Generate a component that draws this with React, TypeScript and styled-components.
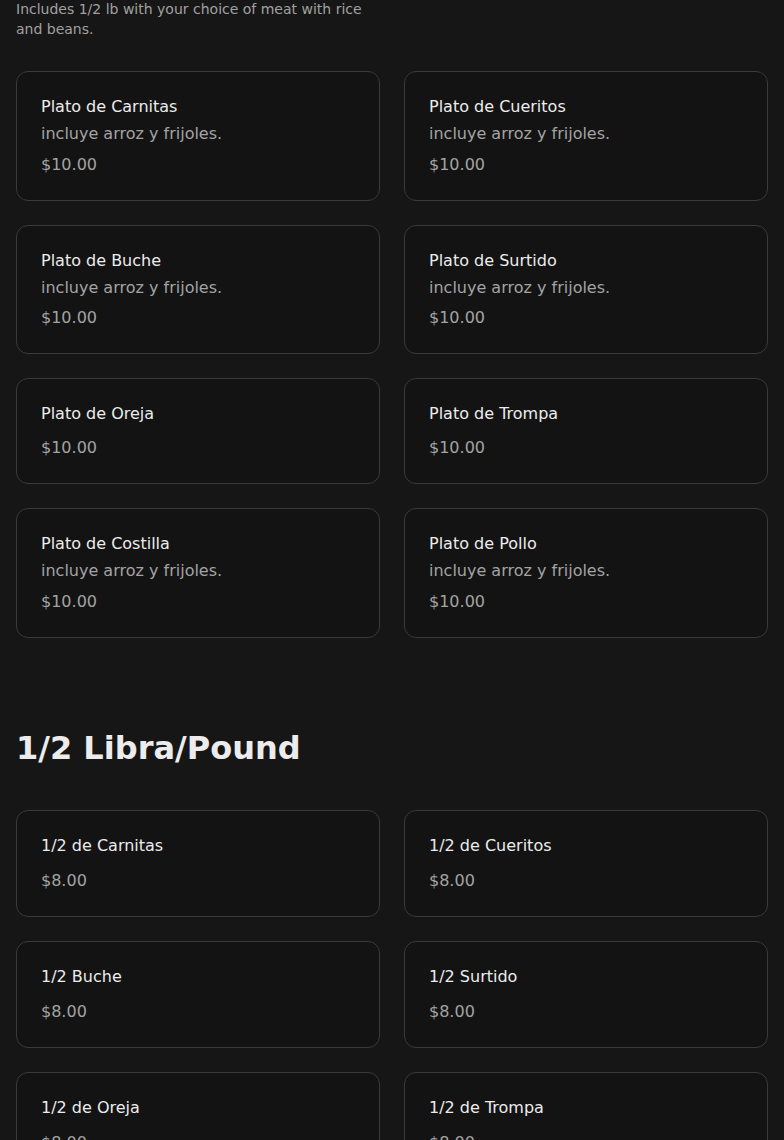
import React from 'react'
import styled, { createGlobalStyle } from 'styled-components'

const GlobalStyle = createGlobalStyle`
    html, body {
        margin: 0;
        padding: 0;
        background: #161616;
    }
    body {
        font-family: "DejaVu Sans", "Liberation Sans", sans-serif;
        color: #ececec;
    }
`

const Page = styled.main`
    padding: 0 16px 40px;
    margin-top: -1px;
`

const Section = styled.section`
    margin-bottom: 90px;
`

const Heading = styled.h2`
    font-size: 32px;
    line-height: 40px;
    font-weight: 700;
    color: #ececec;
    margin: 0 0 42px;
`

const Intro = styled.p`
    font-size: 14px;
    line-height: 20px;
    color: #a1a1a1;
    margin: 0 0 32px;
    max-width: 360px;
`

const Grid = styled.div`
    display: grid;
    grid-template-columns: 1fr 1fr;
    gap: 24px;
    align-items: start;
`

const Card = styled.div`
    background: #131313;
    border: 1px solid #3a3a3a;
    border-radius: 12px;
    padding: 23px 24px;
    display: flex;
    flex-direction: column;
`

const Title = styled.div`
    font-size: 16px;
    line-height: 24px;
    color: #ececec;
`

const Desc = styled.div`
    font-size: 16px;
    line-height: 1.1;
    margin-top: 6px;
    color: #a3a3a3;
`

const Price = styled.div<{ $gap: number }>`
    font-size: 16px;
    line-height: 24px;
    margin-top: ${p => p.$gap}px;
    color: #a3a3a3;
`

type Item = { name: string; desc?: string; price: string }

const platos: Item[] = [
    { name: 'Plato de Carnitas', desc: 'incluye arroz y frijoles.', price: '$10.00' },
    { name: 'Plato de Cueritos', desc: 'incluye arroz y frijoles.', price: '$10.00' },
    { name: 'Plato de Buche', desc: 'incluye arroz y frijoles.', price: '$10.00' },
    { name: 'Plato de Surtido', desc: 'incluye arroz y frijoles.', price: '$10.00' },
    { name: 'Plato de Oreja', price: '$10.00' },
    { name: 'Plato de Trompa', price: '$10.00' },
    { name: 'Plato de Costilla', desc: 'incluye arroz y frijoles.', price: '$10.00' },
    { name: 'Plato de Pollo', desc: 'incluye arroz y frijoles.', price: '$10.00' },
]

const medias: Item[] = [
    { name: '1/2 de Carnitas', price: '$8.00' },
    { name: '1/2 de Cueritos', price: '$8.00' },
    { name: '1/2 Buche', price: '$8.00' },
    { name: '1/2 Surtido', price: '$8.00' },
    { name: '1/2 de Oreja', price: '$8.00' },
    { name: '1/2 de Trompa', price: '$8.00' },
]

function MenuCard({ item, priceGap }: { item: Item; priceGap: number }) {
    return (
        <Card>
            <Title>{item.name}</Title>
            {item.desc && <Desc>{item.desc}</Desc>}
            <Price $gap={priceGap}>{item.price}</Price>
        </Card>
    )
}

export default function App() {
    return (
        <Page>
            <GlobalStyle />
            <Section>
                <Intro>Includes 1/2 lb with your choice of meat with rice and beans.</Intro>
                <Grid>
                    {platos.map(p => <MenuCard key={p.name} item={p} priceGap={10} />)}
                </Grid>
            </Section>
            <Section>
                <Heading>1/2 Libra/Pound</Heading>
                <Grid>
                    {medias.map(p => <MenuCard key={p.name} item={p} priceGap={11} />)}
                </Grid>
            </Section>
        </Page>
    )
}
